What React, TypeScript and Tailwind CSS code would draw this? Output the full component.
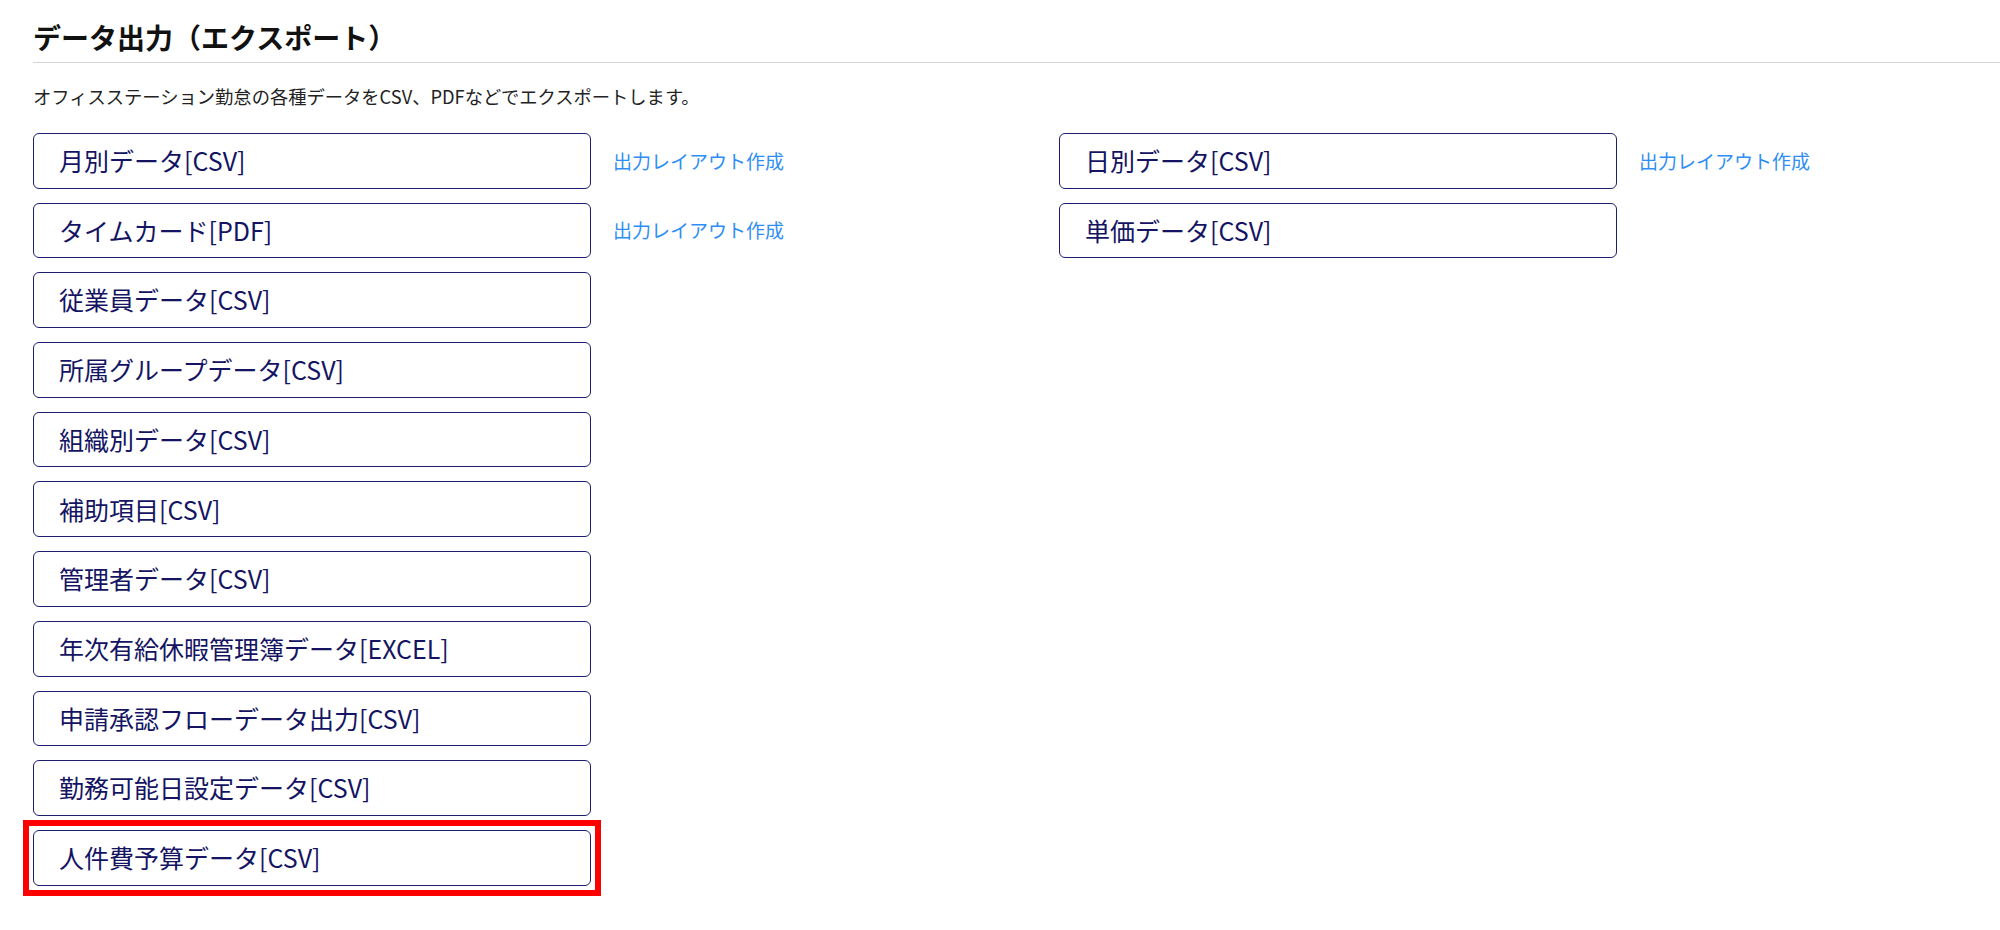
import React from "react";

const FONT = { fontFamily: '"Noto Sans CJK JP", "Noto Sans", sans-serif' };

type Item = { label: string; link?: boolean; marked?: boolean };

const left: Item[] = [
  { label: "月別データ[CSV]", link: true },
  { label: "タイムカード[PDF]", link: true },
  { label: "従業員データ[CSV]" },
  { label: "所属グループデータ[CSV]" },
  { label: "組織別データ[CSV]" },
  { label: "補助項目[CSV]" },
  { label: "管理者データ[CSV]" },
  { label: "年次有給休暇管理簿データ[EXCEL]" },
  { label: "申請承認フローデータ出力[CSV]" },
  { label: "勤務可能日設定データ[CSV]" },
  { label: "人件費予算データ[CSV]", marked: true },
];

const right: Item[] = [
  { label: "日別データ[CSV]", link: true },
  { label: "単価データ[CSV]" },
];

function Row({ item }: { item: Item }) {
  return (
    <div className="flex items-center">
      <div className="relative">
        <button className="flex h-[55.7px] w-[558px] items-center rounded-[6px] border border-[#1e1e70] bg-white pl-[25px] text-left text-[25px] text-[#141463]">
          {item.label}
        </button>
        {item.marked && (
          <div className="pointer-events-none absolute -inset-[10px] border-[6px] border-[#ff0000]" />
        )}
      </div>
      {item.link && (
        <a className="ml-[22px] cursor-pointer text-[19px] text-[#2f8ef5]">出力レイアウト作成</a>
      )}
    </div>
  );
}

export default function App() {
  return (
    <div className="min-h-[930px] bg-white pl-[33px] pt-[18px]" style={FONT}>
      <h1 className="border-b border-[#d4d4d4] pb-[5px] text-[28px] font-bold leading-[39px] text-[#111111]">
        データ出力（エクスポート）
      </h1>
      <p className="mt-[20px] text-[18.3px] leading-[27px] text-[#222222]">
        オフィスステーション勤怠の各種データをCSV、PDFなどでエクスポートします。
      </p>
      <div className="mt-[23px] flex">
        <div className="flex w-[1026px] flex-col gap-[14px]">
          {left.map((it) => (
            <Row key={it.label} item={it} />
          ))}
        </div>
        <div className="flex flex-col gap-[14px]">
          {right.map((it) => (
            <Row key={it.label} item={it} />
          ))}
        </div>
      </div>
    </div>
  );
}
